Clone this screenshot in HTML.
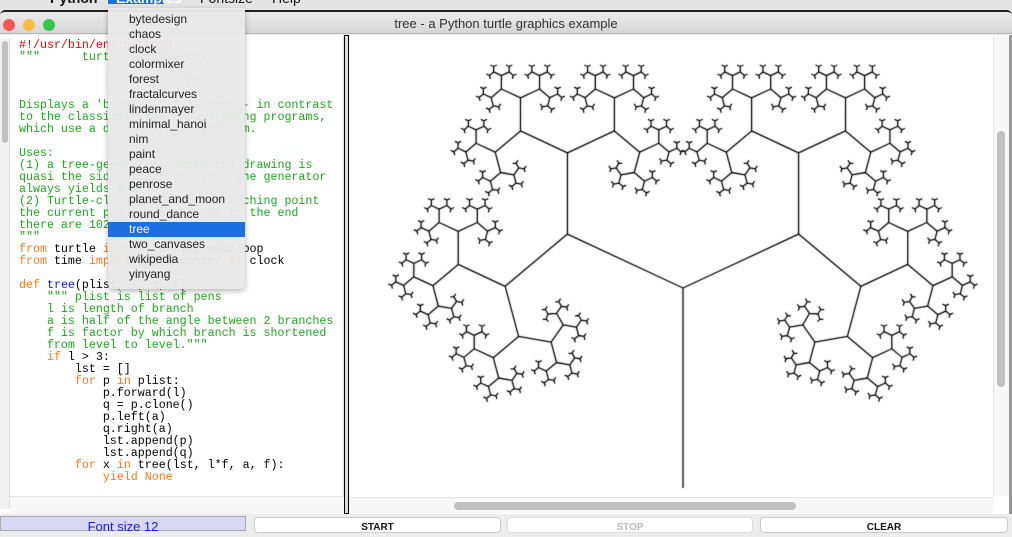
<!DOCTYPE html>
<html><head><meta charset="utf-8">
<style>
*{margin:0;padding:0;box-sizing:border-box}
body{width:1012px;height:531px;overflow:hidden;background:#ececec;position:relative;font-family:"Liberation Sans",sans-serif}
.abs{position:absolute}
#menubar{left:0;top:0;width:1012px;height:10px;background:#e4e4e4;overflow:hidden}
#menubar span{position:absolute;top:-10px;font-size:14px;font-weight:bold;color:#111}
#title{left:0;top:10px;width:1012px;height:24px;background:linear-gradient(#ececec,#d6d6d6);border-top:2px solid #222;border-bottom:1px solid #b8b8b8;border-radius:5px 5px 0 0}
#title .t{position:absolute;left:0;width:1012px;top:4px;text-align:center;font-size:13px;color:#333}
.dot{position:absolute;top:7px;width:12px;height:12px;border-radius:50%}
#code{left:0;top:35px;width:344px;height:479px;background:#fff;border-right:1px solid #ddd}
.r{color:#e00}.g{color:#1daa1d}.o{color:#ff7a1a}.b{color:#1010ee}
#menu{left:108px;top:8px;width:137px;height:281px;background:rgba(232,232,232,0.97);border-radius:0 0 5px 5px;box-shadow:0 2px 6px rgba(0,0,0,.3)}
#menu div{height:15px;line-height:15px;padding-left:21px;font-size:12px;color:#222}
#menu div.sel{background:#1b6fe0;color:#fff}
#src{left:19px;top:40px;font-family:'Liberation Mono',monospace;font-size:11.65px;line-height:12px;white-space:pre;color:#000}
</style></head><body>
<div class="abs" id="menubar">
<span style="left:50px">Python</span>
<span style="left:108px;width:56px;height:14px;background:#1b6fe0;color:#fff;padding-left:8px">Examples</span>
<span style="left:200px;font-weight:normal">Fontsize</span>
<span style="left:272px;font-weight:normal">Help</span>
</div>
<div class="abs" id="title"><div class="t">tree - a Python turtle graphics example</div>
<div class="dot" style="left:3px;background:#fc5753"></div>
<div class="dot" style="left:23px;background:#fdbc40"></div>
<div class="dot" style="left:43px;background:#34c84a"></div>
</div>
<div class="abs" id="code">
<div class="abs" style="left:0;top:4px;width:10px;height:470px;background:#f0f0f0;border-right:1px solid #ddd"></div>
<div class="abs" style="left:2px;top:6px;width:6px;height:102px;background:#c0c0c0;border-radius:3px"></div>
<div class="abs" style="left:10px;top:461px;width:334px;height:18px;background:#f7f7f7;border-top:1px solid #e4e4e4"></div>
</div>
<pre class="abs" id="src"><span class="r">#!/usr/bin/env python3</span>
<span class="g">"""      turtle-example-suite:</span>

<span class="g">             tdemo_tree.py</span>

<span class="g">Displays a 'breadth-first-tree' - in contrast
to the classical Logo tree drawing programs,
which use a depth-first-algorithm.

Uses:
(1) a tree-generator, where the drawing is
quasi the side-effect, whereas the generator
always yields None.
(2) Turtle-cloning: At each branching point
the current pen is cloned. So in the end
there are 1024 turtles.
"""</span>
<span class="o">from</span> turtle <span class="o">import</span> Turtle, mainloop
<span class="o">from</span> time <span class="o">import</span> perf_counter <span class="o">as</span> clock

<span class="o">def</span> <span class="b">tree</span>(plist, l, a, f):
    <span class="g">""" plist is list of pens
    l is length of branch
    a is half of the angle between 2 branches
    f is factor by which branch is shortened
    from level to level."""</span>
    <span class="o">if</span> l &gt; 3:
        lst = []
        <span class="o">for</span> p <span class="o">in</span> plist:
            p.forward(l)
            q = p.clone()
            p.left(a)
            q.right(a)
            lst.append(p)
            lst.append(q)
        <span class="o">for</span> x <span class="o">in</span> tree(lst, l*f, a, f):
            <span class="o">yield</span> <span class="o">None</span></pre>
<div class="abs" style="left:344px;top:35px;width:5px;height:479px;background:#ddd;border:1px solid #000"></div>
<div class="abs" style="left:349px;top:35px;width:661px;height:479px;background:#fff"></div>
<canvas id="cv" class="abs" style="left:349px;top:35px" width="644" height="461"></canvas>
<div class="abs" style="left:993px;top:35px;width:16px;height:461px;background:#f7f7f7;border-left:1px solid #e4e4e4"></div>
<div class="abs" style="left:997px;top:131px;width:8px;height:256px;background:#c0c0c0;border-radius:4px"></div>
<div class="abs" style="left:1009px;top:35px;width:3px;height:479px;background:#999"></div>
<div class="abs" style="left:349px;top:497px;width:644px;height:16px;background:#f7f7f7;border-top:1px solid #e4e4e4"></div>
<div class="abs" style="left:454px;top:502px;width:342px;height:8px;background:#c0c0c0;border-radius:4px"></div>
<div class="abs" style="left:0;top:516px;width:246px;height:15px;background:#d8d8f2;border:1px solid #aaa;text-align:center;color:#1a1aee;font-size:13px;line-height:19px">Font size 12</div>
<div class="abs" style="left:254px;top:517px;width:247px;height:16px;background:#fff;border:1px solid #ccc;border-radius:4px;text-align:center;font-size:10px;font-weight:bold;line-height:19px;color:#111">START</div>
<div class="abs" style="left:507px;top:517px;width:246px;height:16px;background:#fff;border:1px solid #ddd;border-radius:4px;text-align:center;font-size:10px;font-weight:bold;line-height:19px;color:#bbb">STOP</div>
<div class="abs" style="left:760px;top:517px;width:248px;height:16px;background:#fff;border:1px solid #ccc;border-radius:4px;text-align:center;font-size:10px;font-weight:bold;line-height:19px;color:#111">CLEAR</div>
<div class="abs" id="menu">
<div style="margin-top:4px">bytedesign</div><div>chaos</div><div>clock</div><div>colormixer</div><div>forest</div><div>fractalcurves</div><div>lindenmayer</div><div>minimal_hanoi</div><div>nim</div><div>paint</div><div>peace</div><div>penrose</div><div>planet_and_moon</div><div>round_dance</div><div class="sel">tree</div><div>two_canvases</div><div>wikipedia</div><div>yinyang</div>
</div>
<script>
var c=document.getElementById('cv').getContext('2d');
c.strokeStyle='#000';c.lineWidth=1.3;
var ox=683-349,oy=278-35;
var pens=[{x:0,y:-210,h:90}];
var l=200,a=65,f=0.6375;
c.beginPath();
while(l>3){var n=[];
for(var i=0;i<pens.length;i++){var p=pens[i];var r=p.h*Math.PI/180;
var nx=p.x+l*Math.cos(r),ny=p.y+l*Math.sin(r);
c.moveTo(ox+p.x,oy-p.y);c.lineTo(ox+nx,oy-ny);
n.push({x:nx,y:ny,h:p.h+a});n.push({x:nx,y:ny,h:p.h-a});}
pens=n;l*=f;}
c.stroke();
</script>
</body></html>
